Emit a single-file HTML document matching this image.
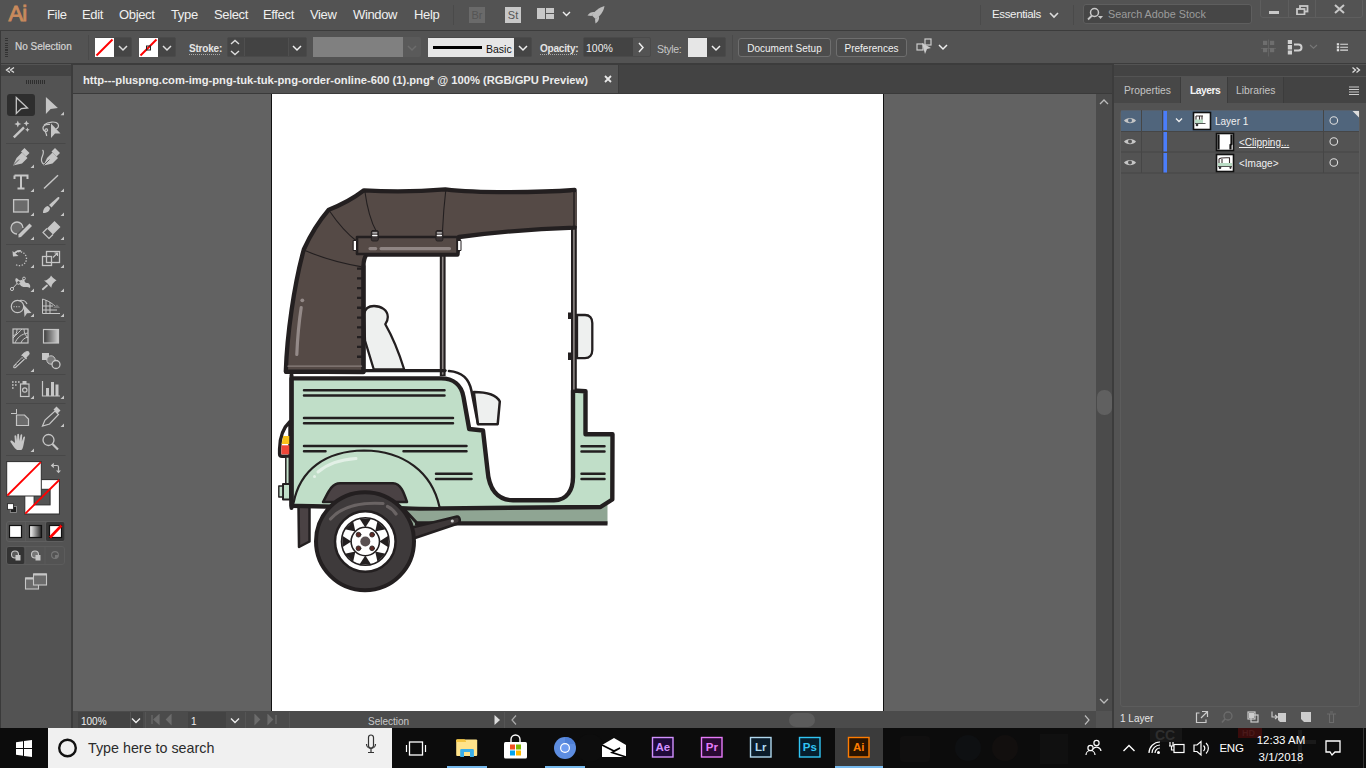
<!DOCTYPE html>
<html><head><meta charset="utf-8">
<style>
*{margin:0;padding:0;box-sizing:border-box}
html,body{width:1366px;height:768px;overflow:hidden;background:#535353;font-family:"Liberation Sans",sans-serif;color:#e8e8e8}
.a{position:absolute}
#menubar{left:0;top:0;width:1366px;height:30px;background:#535353}
#menubar .m{position:absolute;top:7px;font-size:13px;color:#f0f0f0;letter-spacing:-0.35px}
#ctrl{left:0;top:31px;width:1366px;height:33px;background:#535353}
.line{background:#3c3c3c}
#tools{left:0;top:64px;width:71px;height:664px;background:#535353}
#doc{left:73px;top:64px;width:1039px;height:664px;background:#626262}
#tabbar{left:73px;top:65px;width:1039px;height:29px;background:#434343}
#tab{left:73px;top:65px;width:546px;height:28px;background:#535353;border-right:1px solid #3c3c3c}
#artboard{left:272px;top:94px;width:611px;height:617px;background:#fff}
#vscroll{left:1096px;top:94px;width:16px;height:617px;background:#4b4b4b}
#status{left:73px;top:711px;width:1039px;height:17px;background:#4b4b4b}
#rpanel{left:1114px;top:64px;width:252px;height:664px;background:#535353}
#taskbar{left:0;top:728px;width:1366px;height:40px;background:#0c0c0c}
</style></head>
<body>
<div id="menubar" class="a">
  <div class="a" style="left:8.5px;top:1px;font-size:22px;color:#c98a5c;letter-spacing:-0.8px;-webkit-text-stroke:0.9px #c98a5c">Ai</div>
  <span class="m" style="left:47px">File</span>
  <span class="m" style="left:82px">Edit</span>
  <span class="m" style="left:119px">Object</span>
  <span class="m" style="left:171px">Type</span>
  <span class="m" style="left:214px">Select</span>
  <span class="m" style="left:263px">Effect</span>
  <span class="m" style="left:310px">View</span>
  <span class="m" style="left:353px">Window</span>
  <span class="m" style="left:414px">Help</span>
  <div class="a" style="left:453px;top:5px;width:1px;height:20px;background:#4a4a4a"></div>
  <div class="a" style="left:469px;top:7px;width:16px;height:16px;background:#6a6a6a;color:#555;font-size:11px;text-align:center;line-height:17px">Br</div>
  <div class="a" style="left:505px;top:7px;width:16px;height:16px;background:#c8c8c8;color:#555;font-size:11px;text-align:center;line-height:17px">St</div>
  <div class="a" style="left:537px;top:8px;width:8px;height:11px;background:#c8c8c8"></div>
  <div class="a" style="left:546px;top:8px;width:8px;height:5px;background:#c8c8c8"></div>
  <div class="a" style="left:546px;top:14px;width:8px;height:5px;background:#c8c8c8"></div>
  <svg class="a" style="left:562px;top:10px" width="10" height="8"><path d="M1 2 L4.5 5.5 L8 2" stroke="#eee" stroke-width="1.4" fill="none"/></svg>
  <svg class="a" style="left:586px;top:5px" width="20" height="20"><path d="M18.5 1 C13 2.5 8.5 6 6 10.5 L9.5 14 C14 11.5 17.5 7 18.5 1 Z" fill="#bdbdbd"/><path d="M5.5 11 L1.5 10.5 C3.5 7.5 6 6.5 9 7 Z M9 14.5 L9.5 18.5 C12.5 16.5 13.5 14 13 11 Z" fill="#bdbdbd"/></svg>
  <div class="a" style="left:980px;top:5px;width:1px;height:20px;background:#4a4a4a"></div>
  <span class="m" style="left:992px;top:8px;color:#f0f0f0;font-size:11.5px">Essentials</span>
  <svg class="a" style="left:1049px;top:11px" width="10" height="8"><path d="M1 2 L5 6 L9 2" stroke="#ddd" stroke-width="1.6" fill="none"/></svg>
  <div class="a" style="left:1073px;top:5px;width:1px;height:20px;background:#4a4a4a"></div>
  <div class="a" style="left:1083px;top:4px;width:169px;height:20px;background:#464646;border:1px solid #5e5e5e;border-radius:3px"></div>
  <svg class="a" style="left:1086px;top:7px" width="18" height="14"><circle cx="8.5" cy="5.5" r="4" stroke="#c8c8c8" stroke-width="1.5" fill="none"/><path d="M6 8.5 L2 12.5" stroke="#c8c8c8" stroke-width="1.8"/><path d="M12 9 L17 9 L14.5 12 Z" fill="#c8c8c8"/></svg>
  <span class="a" style="left:1108px;top:8px;font-size:10.8px;color:#9c9c9c">Search Adobe Stock</span>
  <div class="a" style="left:1260px;top:-2px;width:103px;height:20px;border:1px solid #5e5e5e;border-radius:3px"></div>
  <div class="a" style="left:1288px;top:0;width:1px;height:18px;background:#5e5e5e"></div>
  <div class="a" style="left:1315px;top:0;width:1px;height:18px;background:#5e5e5e"></div>
  <div class="a" style="left:1269px;top:11px;width:10px;height:3px;background:#c8c8c8"></div>
  <svg class="a" style="left:1296px;top:5px" width="13" height="10"><rect x="4" y="1" width="7.5" height="5.5" stroke="#c8c8c8" stroke-width="1.8" fill="none"/><rect x="1" y="4" width="7.5" height="5.5" stroke="#c8c8c8" stroke-width="1.8" fill="#535353"/></svg>
  <svg class="a" style="left:1334px;top:4px" width="11" height="10"><path d="M1 1 L10 9 M10 1 L1 9" stroke="#c8c8c8" stroke-width="2"/></svg>
</div>
<div class="a line" style="left:0;top:30px;width:1366px;height:1px"></div>
<div id="ctrl" class="a">
  <div class="a" style="left:5px;top:7px;width:3px;height:19px;background:repeating-linear-gradient(#333 0 1px,transparent 1px 2.3px)"></div>
  <span class="a" style="left:15px;top:10px;font-size:10px;color:#d4d4d4;-webkit-text-stroke:0.2px #d4d4d4">No Selection</span>
  <div class="a" style="left:88px;top:4px;width:1px;height:25px;background:#4a4a4a"></div>
  <!-- fill swatch -->
  <div class="a" style="left:95px;top:6px;width:37px;height:20px;border:1px solid #4a4a4a;border-radius:2px;background:#454545"></div>
  <svg class="a" style="left:95px;top:7px" width="19" height="19"><rect width="19" height="19" fill="#fff"/><path d="M1.5 17.5 L17.5 1.5" stroke="#f00" stroke-width="2"/></svg>
  <svg class="a" style="left:118px;top:13px" width="10" height="8"><path d="M1 2 L5 6 L9 2" stroke="#ddd" stroke-width="1.5" fill="none"/></svg>
  <div class="a" style="left:139px;top:6px;width:37px;height:20px;border:1px solid #4a4a4a;border-radius:2px;background:#454545"></div>
  <svg class="a" style="left:139px;top:7px" width="19" height="19"><rect width="19" height="19" fill="#fff"/><path d="M1.5 17.5 L17.5 1.5" stroke="#f00" stroke-width="2"/><rect x="7.5" y="8" width="4" height="4" fill="none" stroke="#222" stroke-width="1"/></svg>
  <svg class="a" style="left:162px;top:13px" width="10" height="8"><path d="M1 2 L5 6 L9 2" stroke="#ddd" stroke-width="1.5" fill="none"/></svg>
  <span class="a" style="left:189px;top:12px;font-size:10px;color:#e4e4e4;font-weight:bold;letter-spacing:-0.2px">Stroke:</span>
  <div class="a" style="left:189px;top:23px;width:31px;height:1px;background:repeating-linear-gradient(90deg,#aaa 0 1px,transparent 1px 2px)"></div>
  <div class="a" style="left:227px;top:6px;width:80px;height:20px;border:1px solid #4a4a4a;border-radius:2px;background:#454545"></div>
  <div class="a" style="left:244px;top:7px;width:45px;height:18px;background:#434343;border-left:1px solid #4f4f4f;border-right:1px solid #4f4f4f"></div>
  <svg class="a" style="left:229px;top:8px" width="12" height="17"><path d="M2 5 L6 1.5 L10 5 M2 12 L6 15.5 L10 12" stroke="#ddd" stroke-width="1.4" fill="none"/></svg>
  <svg class="a" style="left:292px;top:13px" width="10" height="8"><path d="M1 2 L5 6 L9 2" stroke="#eee" stroke-width="1.5" fill="none"/></svg>
  <div class="a" style="left:313px;top:6px;width:108px;height:20px;border-radius:2px;background:#5a5a5a"></div>
  <div class="a" style="left:313px;top:6px;width:90px;height:20px;background:#808080"></div>
  <svg class="a" style="left:407px;top:13px" width="10" height="8"><path d="M1 2 L5 6 L9 2" stroke="#6c6c6c" stroke-width="1.5" fill="none"/></svg>
  <div class="a" style="left:428px;top:6px;width:104px;height:20px;border:1px solid #4a4a4a;border-radius:2px;background:#454545"></div>
  <div class="a" style="left:428px;top:7px;width:86px;height:19px;background:#e6e6e6"></div>
  <div class="a" style="left:433px;top:15px;width:49px;height:3px;background:#000"></div>
  <span class="a" style="left:486px;top:12px;font-size:10.5px;color:#111">Basic</span>
  <svg class="a" style="left:518px;top:13px" width="10" height="8"><path d="M1 2 L5 6 L9 2" stroke="#eee" stroke-width="1.5" fill="none"/></svg>
  <span class="a" style="left:540px;top:12px;font-size:10px;color:#e4e4e4;font-weight:bold;letter-spacing:-0.2px">Opacity:</span>
  <div class="a" style="left:540px;top:23px;width:37px;height:1px;background:repeating-linear-gradient(90deg,#aaa 0 1px,transparent 1px 2px)"></div>
  <div class="a" style="left:583px;top:6px;width:68px;height:20px;border:1px solid #4a4a4a;border-radius:2px;background:#535353"></div>
  <div class="a" style="left:584px;top:7px;width:49px;height:18px;background:#434343"></div>
  <span class="a" style="left:586px;top:11px;font-size:10.5px;color:#eee">100%</span>
  <svg class="a" style="left:637px;top:11px" width="8" height="11"><path d="M2 1 L6 5.5 L2 10" stroke="#eee" stroke-width="1.5" fill="none"/></svg>
  <span class="a" style="left:657px;top:12px;font-size:10.5px;color:#c6c6c6;letter-spacing:-0.3px">Style:</span>
  <div class="a" style="left:688px;top:6px;width:38px;height:20px;border:1px solid #4a4a4a;border-radius:2px;background:#454545"></div>
  <div class="a" style="left:688px;top:7px;width:19px;height:19px;background:#e6e6e6"></div>
  <svg class="a" style="left:711px;top:13px" width="10" height="8"><path d="M1 2 L5 6 L9 2" stroke="#eee" stroke-width="1.5" fill="none"/></svg>
  <div class="a" style="left:732px;top:4px;width:1px;height:25px;background:#4a4a4a"></div>
  <div class="a" style="left:738px;top:7px;width:93px;height:19px;border:1px solid #6e6e6e;border-radius:3px;background:#4c4c4c;font-size:10px;color:#f0f0f0;text-align:center;line-height:19px">Document Setup</div>
  <div class="a" style="left:836px;top:7px;width:71px;height:19px;border:1px solid #6e6e6e;border-radius:3px;background:#4c4c4c;font-size:10px;color:#f0f0f0;text-align:center;line-height:19px">Preferences</div>
  <svg class="a" style="left:916px;top:7px" width="18" height="18"><rect x="1" y="6" width="6" height="6" stroke="#ccc" fill="none" stroke-width="1.2"/><rect x="9" y="1" width="6" height="6" stroke="#ccc" fill="none" stroke-width="1.2"/><path d="M6 5 L15 10 L11 11 L9 16 Z" fill="#ccc"/></svg>
  <svg class="a" style="left:938px;top:12px" width="10" height="8"><path d="M1 2 L5 6 L9 2" stroke="#eee" stroke-width="1.5" fill="none"/></svg>
  <svg class="a" style="left:1250px;top:2px" width="116" height="26">
    <path d="M18.5 6.5 V23.5 M11 15.5 H26" stroke="#666" stroke-width="0.8"/>
    <rect x="13" y="7.8" width="4.2" height="4.2" fill="#6e6e6e"/><rect x="20" y="7.8" width="4.2" height="4.2" fill="#6e6e6e"/>
    <rect x="13" y="15" width="4.2" height="4.2" fill="#6e6e6e"/><rect x="20" y="15" width="4.2" height="4.2" fill="#6e6e6e"/>
    <rect x="37.8" y="7" width="4.2" height="4" fill="#d0d0d0"/><rect x="37.8" y="12" width="4.2" height="4.5" fill="#d0d0d0"/><rect x="37.8" y="17.5" width="4.2" height="4" fill="#d0d0d0"/>
    <path d="M44 11.5 H48.5 A3 3 0 0 1 48.5 17.5 H44" stroke="#d0d0d0" stroke-width="2" fill="none"/>
    <path d="M60 12 L63.5 15.2 L67 12" stroke="#777" stroke-width="1.1" fill="none"/>
    <rect x="86.8" y="10.2" width="2.3" height="2.2" fill="#ddd"/><rect x="86.8" y="13.2" width="2.3" height="2.2" fill="#ddd"/><rect x="86.8" y="16.1" width="2.3" height="2.2" fill="#ddd"/>
    <path d="M90.2 11.2 H98 M90.2 14.2 H98 M90.2 17.1 H98" stroke="#ddd" stroke-width="1.1"/>
  </svg>
</div>
<div class="a line" style="left:0;top:63px;width:1366px;height:2px"></div>
<div id="tools" class="a"></div>
<div class="a" style="left:0;top:65px;width:71px;height:11px;background:#434343"></div>
<svg class="a" style="left:0;top:0" width="71" height="728">
  <!-- header << -->
  <path d="M10 67.5 L6.5 70 L10 72.5 M14 67.5 L10.5 70 L14 72.5" stroke="#ddd" stroke-width="1.3" fill="none"/>
  <path d="M26.5 80v4M28.5 80v4M30.5 80v4M32.5 80v4M34.5 80v4M36.5 80v4M38.5 80v4M40.5 80v4M42.5 80v4M44.5 80v4" stroke="#2e2e2e" stroke-width="1"/>
  <!-- selection active bg -->
  <rect x="7" y="94" width="28" height="22" rx="3" fill="#2e2e2e"/>
  <path d="M16.3 97.5 L27.5 108 L21.3 108.6 L16.3 113.5 Z" fill="none" stroke="#c6c6c6" stroke-width="1.3" stroke-linejoin="miter"/>
  <path d="M45.9 97.1 L57.9 108 L50.6 109 L45.9 113.9 Z" fill="#c6c6c6"/>
  <path d="M64 111.8 L64 115.3 L60.5 115.3 Z" fill="#c6c6c6"/>
  <!-- magic wand -->
  <path d="M13.8 137.3 L24 127.3" stroke="#c6c6c6" stroke-width="2.4"/>
  <path d="M17.8 120.5 l1 2.5 2.5 1 -2.5 1 -1 2.5 -1 -2.5 -2.5 -1 2.5 -1z" fill="#c6c6c6"/>
  <path d="M26.4 120.5 l0.9 2 2 0.9 -2 0.9 -0.9 2 -0.9 -2 -2 -0.9 2 -0.9z" fill="#c6c6c6"/>
  <path d="M27.4 127.5 l0.7 1.5 1.5 0.7 -1.5 0.7 -0.7 1.5 -0.7 -1.5 -1.5 -0.7 1.5 -0.7z" fill="#c6c6c6"/>
  <!-- lasso -->
  <path d="M50 124.5 C44 124 42 127 43.5 130 C44.5 132 47 132 47.5 130.5 C48 129 45.5 128 45 130 C44.8 132 47 134 46.5 136" stroke="#c6c6c6" stroke-width="1.2" fill="none"/>
  <path d="M44 125 C48 121.5 56 121 58 124 C59 126 58 128 56 129" stroke="#c6c6c6" stroke-width="1.2" fill="none"/>
  <path d="M51 123.5 L60.5 133.5 L55 133.5 L51 138 Z" fill="#c6c6c6"/>
  <path d="M6 143.5 H65.5" stroke="#484848" stroke-width="1"/>
  <!-- pen -->
  <path d="M13 165.5 L16.5 158 L22 152.5 L27.5 158 L22 163.5 Z" fill="#c6c6c6"/>
  <path d="M21 151.5 L24.5 148 L29.5 153 L26 156.5 Z" fill="#c6c6c6"/>
  <path d="M13.5 165 L19 159.5" stroke="#535353" stroke-width="0.9"/>
  <path d="M34 164.5 L34 168 L30.5 168 Z" fill="#c6c6c6"/>
  <!-- curvature pen -->
  <path d="M42.5 150 C45 152 42 156 41.5 159 C41 162 43 164.5 45 164" stroke="#c6c6c6" stroke-width="1.2" fill="none"/>
  <path d="M43.5 165.5 L47 158 L52.5 152.5 L58 158 L52.5 163.5 Z" fill="#c6c6c6"/>
  <path d="M51.5 151.5 L55 148 L60 153 L56.5 156.5 Z" fill="#c6c6c6"/>
  <path d="M44 165 L49.5 159.5" stroke="#535353" stroke-width="0.9"/>
  <!-- type -->
  <path d="M14.5 175.5 H27.5 V179 M14.5 179 V175.5 M21 175.5 V188.5 M17.5 188.5 H24.5" stroke="#c6c6c6" stroke-width="2" fill="none"/>
  <path d="M34 188.5 L34 192 L30.5 192 Z" fill="#c6c6c6"/>
  <path d="M44 188.5 L58 175.3" stroke="#c6c6c6" stroke-width="1.5"/>
  <path d="M64 188.5 L64 192 L60.5 192 Z" fill="#c6c6c6"/>
  <!-- rect -->
  <rect x="13.6" y="199.7" width="14.6" height="12.3" fill="#6b6b6b" stroke="#c6c6c6" stroke-width="1.3"/>
  <path d="M34 212.5 L34 216 L30.5 216 Z" fill="#c6c6c6"/>
  <!-- brush -->
  <path d="M43 213 C43 209 45 206.5 48 206 L50 208 C50 211 47 213 43 213Z" fill="#c6c6c6"/>
  <path d="M49 205 L57.5 197.5 C59 196.5 60 197.5 59 199 L51.5 207.5 Z" fill="#c6c6c6"/>
  <path d="M64 212.5 L64 216 L60.5 216 Z" fill="#c6c6c6"/>
  <!-- shaper -->
  <path d="M23 228 A6 6 0 1 0 17 234" stroke="#c6c6c6" stroke-width="1.3" fill="#6b6b6b"/>
  <path d="M18.5 237.5 L18.5 234.5 L29.5 223.5 L32 226 L21 237 Z" fill="#c6c6c6"/>
  <path d="M34 236.5 L34 240 L30.5 240 Z" fill="#c6c6c6"/>
  <!-- eraser -->
  <path d="M47 228.5 L54.5 221 L60.5 227 L53 234.5 Z" fill="#c6c6c6"/>
  <path d="M47 228.5 L43 232.5 L49 238.5 L53 234.5" fill="none" stroke="#c6c6c6" stroke-width="1.2"/>
  <path d="M64 236.5 L64 240 L60.5 240 Z" fill="#c6c6c6"/>
  <path d="M6 244.5 H65.5" stroke="#484848" stroke-width="1"/>
  <!-- rotate -->
  <path d="M13.5 255 A7 7 0 1 1 15 264" stroke="#c6c6c6" stroke-width="1.3" fill="none" stroke-dasharray="1.3 1.5"/>
  <path d="M12.5 251 L13 256.5 L18.5 256 Z" fill="#c6c6c6"/>
  <path d="M13.5 255 C15 252 18 250.5 21 251" stroke="#c6c6c6" stroke-width="1.6" fill="none"/>
  <path d="M34 264.5 L34 268 L30.5 268 Z" fill="#c6c6c6"/>
  <!-- scale -->
  <rect x="42.5" y="256.5" width="9" height="9" stroke="#c6c6c6" stroke-width="1.3" fill="none"/>
  <rect x="46.5" y="251.5" width="13" height="11" stroke="#c6c6c6" stroke-width="1.3" fill="none"/>
  <path d="M53 257.5 L57.5 253 M54.5 253 H57.5 V256" stroke="#c6c6c6" stroke-width="1.2" fill="none"/>
  <path d="M64 264.5 L64 268 L60.5 268 Z" fill="#c6c6c6"/>
  <!-- puppet warp -->
  <path d="M16 278 C14 281 17 284 19 283 L21 286 C24 288 28 286 30 288 C31 285 29 283 27 283 C25 283 24 281 24.5 279 C22 281 19 281 18 279 Z" fill="#c6c6c6"/>
  <path d="M12 289 L18 282.5 L24 279" stroke="#c6c6c6" stroke-width="1" fill="none"/>
  <circle cx="12" cy="289" r="1.6" fill="#535353" stroke="#c6c6c6" stroke-width="1"/>
  <circle cx="18.5" cy="282.5" r="1.8" fill="#535353" stroke="#c6c6c6" stroke-width="1"/>
  <circle cx="24" cy="278.5" r="1.4" fill="#535353" stroke="#c6c6c6" stroke-width="1"/>
  <path d="M34 288.5 L34 292 L30.5 292 Z" fill="#c6c6c6"/>
  <!-- pin -->
  <path d="M51 275.5 C52.5 277.5 54.5 279 56.5 280.5 C54.5 281.5 53 283 52 285 C51.5 286 51.5 287 51.3 287.8 C49 285 46.5 282.5 44 280.5 C45.5 280.5 47 280 48 279 C49.5 278 50.5 277 51 275.5 Z" fill="#c6c6c6"/>
  <path d="M47 285.5 L42.8 289.2" stroke="#c6c6c6" stroke-width="1.8" stroke-linecap="round"/>
  <path d="M64 288.5 L64 292 L60.5 292 Z" fill="#c6c6c6"/>
  <!-- shape builder -->
  <circle cx="17.5" cy="306.5" r="6.2" stroke="#c6c6c6" stroke-width="1.2" fill="none"/>
  <path d="M19.5 300.6 A6.2 6.2 0 0 1 27 304" stroke="#c6c6c6" stroke-width="1.2" fill="none"/>
  <path d="M13.5 306.8h1.2M16 306.8h1.2M18.5 306.8h1.2" stroke="#c6c6c6" stroke-width="1.1"/>
  <path d="M23.5 304.5 L31.5 313 L27 313.3 L24.5 317 Z" fill="#c6c6c6"/>
  <path d="M34 313.5 L34 317 L30.5 317 Z" fill="#c6c6c6"/>
  <!-- perspective grid -->
  <path d="M42.5 299 V313.5 H60 M42.5 299 C49 301 53 304 56 307 M42.5 310 H57 M42.5 306 L53 306 M46 300 V313.5 M50 302 V313.5" stroke="#c6c6c6" stroke-width="1" fill="none"/>
  <path d="M53 308 L57 304.5 L60 308 Z" fill="#7a7a7a"/>
  <path d="M64 313.5 L64 317 L60.5 317 Z" fill="#c6c6c6"/>
  <path d="M6 321.5 H65.5" stroke="#484848" stroke-width="1"/>
  <!-- mesh -->
  <rect x="13" y="329" width="15" height="14" stroke="#c6c6c6" stroke-width="1.2" fill="none"/>
  <path d="M13 338 C17 334 20 331 22 329 M15 343 C17 338 21 334 28 333 M21 343 C22 340 24 338 28 337 M17 329 C17 333 16 335 13 336 M24 329 C24 333 26 336 28 338" stroke="#c6c6c6" stroke-width="1" fill="none"/>
  <!-- gradient -->
  <defs><linearGradient id="tg" x1="0" x2="1"><stop offset="0" stop-color="#3a3a3a"/><stop offset="1" stop-color="#d0d0d0"/></linearGradient>
  <linearGradient id="tg2" x1="0" x2="1"><stop offset="0" stop-color="#fff"/><stop offset="1" stop-color="#222"/></linearGradient></defs>
  <rect x="43.5" y="329.5" width="15" height="13.5" stroke="#c6c6c6" stroke-width="1.2" fill="url(#tg)"/>
  <!-- eyedropper -->
  <circle cx="27.2" cy="353.5" r="2.4" fill="#c6c6c6"/>
  <path d="M21 355.5 L24.5 352 L27.5 355 L28 356 L26.5 357.5 L27 358.5 L26 359.5 L22.5 356 Z" fill="#c6c6c6"/>
  <path d="M22.5 357.5 L15 365 C13 366.5 13.5 368.5 15.5 367.5 L24.5 359" fill="none" stroke="#c6c6c6" stroke-width="1.1"/>
  <path d="M17 364 L22.5 358.5" stroke="#3a3a3a" stroke-width="1.5" stroke-dasharray="1 0.6"/>
  <path d="M34 368.5 L34 372 L30.5 372 Z" fill="#c6c6c6"/>
  <!-- blend -->
  <rect x="42" y="353" width="7" height="7" fill="#c6c6c6"/>
  <circle cx="51" cy="360" r="4.2" fill="#7a7a7a" stroke="#c6c6c6" stroke-width="1"/>
  <circle cx="56" cy="364.5" r="4" fill="#535353" stroke="#c6c6c6" stroke-width="1.3"/>
  <path d="M6 374.5 H65.5" stroke="#484848" stroke-width="1"/>
  <!-- symbol sprayer -->
  <path d="M12 382h1.6M15 382h1.6M18 382h1.6M12 385h1.6M15 385h1.6M12 388h1.6" stroke="#c6c6c6" stroke-width="1.6"/>
  <rect x="20.5" y="384" width="8.5" height="12.5" stroke="#c6c6c6" stroke-width="1.2" fill="none"/>
  <rect x="22.5" y="381" width="4" height="3" fill="#c6c6c6"/>
  <circle cx="24.8" cy="390" r="2.2" stroke="#c6c6c6" stroke-width="1.2" fill="none"/>
  <path d="M34 395.5 L34 399 L30.5 399 Z" fill="#c6c6c6"/>
  <!-- graph -->
  <path d="M42.5 381 V396 H60" stroke="#c6c6c6" stroke-width="1.2" fill="none"/>
  <rect x="46" y="388" width="3" height="8" fill="#c6c6c6"/>
  <rect x="51" y="382" width="3" height="14" fill="#c6c6c6"/>
  <rect x="55.5" y="384.5" width="3" height="11.5" fill="#c6c6c6"/>
  <path d="M64 395.5 L64 399 L60.5 399 Z" fill="#c6c6c6"/>
  <path d="M6 403.5 H65.5" stroke="#484848" stroke-width="1"/>
  <!-- artboard -->
  <path d="M16.5 409 V414 M11 413.5 H16" stroke="#c6c6c6" stroke-width="1"/>
  <path d="M16.5 415 H24.5 L28.5 419 V425.5 H16.5 Z" fill="#6b6b6b" stroke="#c6c6c6" stroke-width="1.2"/>
  <!-- slice/knife -> pencil-like -->
  <path d="M42.5 426 L45 420 L55 411 L58.5 414.5 L49.5 424 Z" fill="none" stroke="#c6c6c6" stroke-width="1.2"/>
  <path d="M53.5 409.5 L56.5 406.5 L60.5 410.5 L57.5 413.5 Z" fill="#c6c6c6"/>
  <path d="M64 423.5 L64 427 L60.5 427 Z" fill="#c6c6c6"/>
  <!-- hand -->
  <path d="M17 450 C14 448 12 444 10.5 442 C10 441 11 440 12.5 441 L15 443 L14.5 436 C14.5 435 16 435 16.3 436 L17 441 L17.3 434.5 C17.5 433.5 19 433.5 19 434.5 L19.5 441 L20.5 435 C20.8 434 22.3 434 22.2 435 L21.8 441.5 L23.5 437 C24 436 25.3 436.3 25 437.5 L23.5 445 C23 448 22 450 21 450 Z" fill="#c6c6c6"/>
  <path d="M34 448.5 L34 452 L30.5 452 Z" fill="#c6c6c6"/>
  <!-- zoom -->
  <circle cx="48.5" cy="440" r="5.5" stroke="#c6c6c6" stroke-width="1.3" fill="none"/>
  <path d="M52.5 444 L58 449.5" stroke="#c6c6c6" stroke-width="2.2"/>
  <path d="M6 455.5 H65.5" stroke="#484848" stroke-width="1"/>
  <!-- fill / stroke -->
  <rect x="24.8" y="479.6" width="34.6" height="34.4" fill="#fff" stroke="#2e2e2e" stroke-width="1"/>
  <rect x="34.1" y="489.3" width="16" height="15.6" fill="#535353" stroke="#2e2e2e" stroke-width="1"/>
  <path d="M25.3 513.6 L59.2 480" stroke="#f00" stroke-width="1.8"/>
  <rect x="6.7" y="461.6" width="34.6" height="34.4" fill="#fff" stroke="#2e2e2e" stroke-width="1"/>
  <path d="M7.3 495.5 L40.8 462.2" stroke="#f00" stroke-width="1.8"/>
  <path d="M50.7 465.5 L53.8 462.8 V468.2 Z M56 470.4 H61 L58.5 473.3 Z" fill="#c6c6c6"/><path d="M53.5 465.5 H57 Q58.5 465.5 58.5 467 V470.8" stroke="#c6c6c6" stroke-width="1.2" fill="none"/>
  <rect x="10.3" y="506.4" width="6.2" height="6" fill="#1e1e1e" stroke="#999" stroke-width="0.8"/>
  <rect x="7.5" y="503.7" width="6" height="5.6" fill="#fff" stroke="#1e1e1e" stroke-width="0.8"/>
  <!-- color/gradient/none -->
  <rect x="6.5" y="521.5" width="58" height="20" rx="2.5" fill="#535353" stroke="#5f5f5f" stroke-width="1"/>
  <rect x="46" y="522" width="18.5" height="19" rx="2" fill="#363636"/>
  <path d="M25.5 522 V541 M45.5 522 V541" stroke="#5a5a5a" stroke-width="1"/>
  <rect x="9.5" y="525.5" width="12" height="12" fill="#fff" stroke="#111" stroke-width="1.2"/>
  <rect x="29.5" y="525.5" width="12" height="12" fill="url(#tg2)" stroke="#111" stroke-width="1.2"/>
  <rect x="49.5" y="525.5" width="12" height="12" fill="#fff" stroke="#111" stroke-width="1.2"/>
  <path d="M50 537.5 L61.5 525.5" stroke="#f00" stroke-width="2.6"/>
  <!-- draw modes -->
  <rect x="6.5" y="546.5" width="58" height="18" rx="2.5" fill="none" stroke="#5c5c5c" stroke-width="1"/>
  <rect x="7" y="547" width="17.5" height="17" rx="2" fill="#333"/>
  <path d="M25 547 V564 M45 547 V564" stroke="#5a5a5a" stroke-width="1"/>
  <circle cx="15" cy="554.5" r="3.5" fill="#5a5a5a" stroke="#c6c6c6" stroke-width="1.1"/>
  <rect x="15.5" y="555" width="5" height="5.5" fill="#c6c6c6"/>
  <circle cx="35" cy="554.5" r="3.5" fill="#777" stroke="#c6c6c6" stroke-width="1.1"/>
  <rect x="35.5" y="555" width="5" height="5.5" fill="#c6c6c6"/>
  <circle cx="55" cy="555" r="3.4" fill="none" stroke="#777" stroke-width="1.1"/>
  <path d="M55 555 H58.4 A3.4 3.4 0 0 1 55 558.4 Z" fill="#777"/>
  <!-- screen mode -->
  <rect x="25.5" y="578" width="13" height="11" fill="#6b6b6b" stroke="#c6c6c6" stroke-width="1.1"/>
  <path d="M25.5 578.5 H38.5" stroke="#c6c6c6" stroke-width="2"/>
  <rect x="33.5" y="574" width="13" height="11" fill="#6b6b6b" stroke="#c6c6c6" stroke-width="1.1"/>
  <path d="M33.5 574.5 H46.5" stroke="#c6c6c6" stroke-width="2"/>
</svg>
<div class="a line" style="left:71px;top:64px;width:2px;height:664px"></div>
<div id="doc" class="a"></div>
<div id="tabbar" class="a"></div>
<div id="tab" class="a"></div>
<div class="a" style="left:73px;top:63px;width:1041px;height:2px;background:#3c3c3c"></div>
<div class="a" style="left:73px;top:93px;width:1039px;height:1px;background:#3a3a3a"></div>
<span class="a" style="left:83px;top:74px;font-size:11.2px;font-weight:bold;color:#ececec;white-space:nowrap">http---pluspng.com-img-png-tuk-tuk-png-order-online-600 (1).png* @ 100% (RGB/GPU Preview)</span>
<svg class="a" style="left:604px;top:75px" width="8" height="8"><path d="M1 1 L7 7 M7 1 L1 7" stroke="#e8e8e8" stroke-width="1.8"/></svg>
<div class="a" style="left:271px;top:94px;width:613px;height:617px;background:#111"></div>
<div id="artboard" class="a"></div>
<svg class="a" style="left:272px;top:94px" width="611" height="617" viewBox="272 94 611 617">
<g stroke-linejoin="round" stroke-linecap="round">
  <!-- chassis strip -->
  <path d="M392 505 L607.5 505 L607.5 524 L425 524 L410 531 Z" fill="#8fa593"/>
  <path d="M401 506 L416 522" stroke="#231f20" stroke-width="3"/>
  <path d="M415 523.3 H607.5" stroke="#231f20" stroke-width="4.2" stroke-linecap="butt"/>
  <!-- swing arm -->
  <path d="M410 528 L457 516.5 C460 516 461 522.5 458 523.5 L412 539 Z" fill="#3e3839" stroke="#231f20" stroke-width="2.5"/>
  <circle cx="452.3" cy="521" r="1.6" fill="#ccc"/>
  <!-- mud flap -->
  <path d="M298.5 506 H309.5 V541.5 L299 547 Z" fill="#4a4244" stroke="#231f20" stroke-width="2.5"/>
  <!-- body left section -->
  <path d="M291.5 378.4 H441 C453 378.4 461.5 385 463.5 397 L469.2 429 L483 430.5 L487.5 470 C489 490 498 500.3 513 500.3 L554 500.3 C567 500.3 573 490 573 477 L573 390.5 L585.5 391.2 L585.5 434.2 L612.5 434.2 L612.3 499.5 L600.5 507 L420 508.6 L291.5 505.8 Z" fill="#c0dec8" stroke="#231f20" stroke-width="4.4"/>
  <!-- fender -->
  <path d="M293.5 503 C300 470 325 451 364 450.5 C404 451 432 472 439.5 507" fill="#c0dec8" stroke="#231f20" stroke-width="2.2"/>
  <path d="M318 472 C326 465 340 459.5 356 458.5" stroke="#e2f0e6" stroke-width="3" fill="none"/><circle cx="314.5" cy="476.5" r="1.5" fill="#e2f0e6"/>
  <!-- body lines -->
  <g stroke="#231f20" stroke-width="2.5">
    <path d="M304 390.3 H444.5 M304 395.4 H444.5"/>
    <path d="M304 418 H453 M304 423.2 H453"/>
    <path d="M304 446 H466.5 M304 451.3 H325.5 M403.5 451.3 H466.5"/>
    <path d="M436 473.8 H471.5 M436 479 H471.5"/>
    <path d="M581.5 446.3 H604.5 M581.5 451.5 H604.5"/>
    <path d="M581.5 473.8 H604.5 M581.5 479 H604.5"/>
  </g>
  <!-- mudguard dark -->
  <path d="M323 502 C328 493 331 483.5 340 483.3 L393 483.3 C401 483.5 404 493 407 502 Z" fill="#4a4244" stroke="#231f20" stroke-width="2.5"/>
  <!-- wheel -->
  <circle cx="365" cy="541.3" r="49" fill="#3e3a3b" stroke="#231f20" stroke-width="4"/>
  <path d="M330.5 519 C340 508 358 502 383 503.5" stroke="#6a6464" stroke-width="3.2" fill="none"/>
  <path d="M387.5 506.5 C391 508 394 511 396 514" stroke="#6a6464" stroke-width="3.2" fill="none"/>
  <circle cx="365.3" cy="541.5" r="30.3" fill="#fff" stroke="#231f20" stroke-width="2.5"/>
  <circle cx="365.3" cy="541.5" r="23.8" fill="#fff" stroke="#231f20" stroke-width="1.6"/>
  <g fill="#231f20" transform="translate(365.3 541.5)"><path d="M-5.8 -23 L5.8 -23 L0 -14 Z" transform="rotate(0)"/><path d="M-5.8 -23 L5.8 -23 L0 -14 Z" transform="rotate(45)"/><path d="M-5.8 -23 L5.8 -23 L0 -14 Z" transform="rotate(90)"/><path d="M-5.8 -23 L5.8 -23 L0 -14 Z" transform="rotate(135)"/><path d="M-5.8 -23 L5.8 -23 L0 -14 Z" transform="rotate(180)"/><path d="M-5.8 -23 L5.8 -23 L0 -14 Z" transform="rotate(225)"/><path d="M-5.8 -23 L5.8 -23 L0 -14 Z" transform="rotate(270)"/><path d="M-5.8 -23 L5.8 -23 L0 -14 Z" transform="rotate(315)"/></g>
  <circle cx="365.3" cy="541.5" r="14.2" fill="#fff" stroke="#231f20" stroke-width="1.6"/>
  <circle cx="365.3" cy="541.5" r="5" fill="#5a5152"/>
  <g fill="#5b2a26" stroke="#231f20" stroke-width="0.8">
    <circle cx="358.5" cy="534.7" r="2.4"/><circle cx="372.1" cy="534.7" r="2.4"/><circle cx="358.5" cy="548.3" r="2.4"/><circle cx="372.1" cy="548.3" r="2.4"/>
  </g>
  <!-- tail light -->
  <path d="M290 421.5 C284 427 279.8 437 279.6 449 V454 Q279.6 456.3 282 456.3 H290 Z" fill="#fff" stroke="#231f20" stroke-width="3.4"/>
  <path d="M283.2 436 H289.5 V444 H281.6 Z" fill="#f8c21c"/>
  <path d="M281.4 445.3 H289.5 V454.3 H281.4 Z" fill="#ee4638"/>
  <rect x="285.8" y="457" width="3.5" height="27" fill="#c0dec8" stroke="#231f20" stroke-width="1.5"/>
  <rect x="283" y="484" width="7" height="15.5" fill="#c0dec8" stroke="#231f20" stroke-width="2"/>
  <rect x="278.8" y="486" width="4" height="11" fill="#c0dec8" stroke="#231f20" stroke-width="1.4"/>
  <path d="M291.5 375 V508" stroke="#231f20" stroke-width="4"/>
  <!-- handle rail -->
  <path d="M449 371 C462 372 469 378 471.5 391 L478 424" stroke="#231f20" stroke-width="2.6" fill="none"/>
  <path d="M473.8 392 C485 392 496 394 499.8 401.5 L497.7 424.2 L478 424.2 Z" fill="#eef0ef" stroke="#231f20" stroke-width="2.5"/>
  <!-- posts -->
  <rect x="439.8" y="252" width="5.8" height="124" fill="#231f20"/><path d="M442.7 254 V374" stroke="#8d8785" stroke-width="1.6"/>
  <rect x="571" y="226" width="5.8" height="165" fill="#231f20"/><path d="M573.9 228 V389" stroke="#8d8785" stroke-width="1.6"/>
  <!-- mirror -->
  <path d="M577 315 H585 C589.5 315 592.3 318 592.3 323 V350 C592.3 355 589.5 358.2 585 358.2 H577 Z" fill="#eef0ef" stroke="#231f20" stroke-width="2.3"/>
  <rect x="568" y="312.5" width="3.5" height="6.5" fill="#231f20"/>
  <rect x="568" y="352.5" width="3.5" height="7.5" fill="#231f20"/>
  <!-- seat -->
  <path d="M364 314 C365 308.5 369 306 374 306 C381 306 387.8 310 387.8 317 C387.8 320 387 322 385.3 324.2 C391.5 335 398.5 351 404.2 369.5 L373.8 369.5 L365 340.6 Z" fill="#eef0ef" stroke="#231f20" stroke-width="2.3"/>
  <!-- canopy -->
  <path d="M364 190.3 C390 192 420 191.5 445.3 189.4 C480 193.5 540 192.5 574.6 190 L574.6 227.6 C545 228.5 505 231 459 237 L457.5 254.5 L366.5 254.5 C364 258 363.5 262 363.5 266 L363.5 372 L285.8 371.5 C287 335 294 285 303.8 249.5 Q314 227 328.8 209.7 C341 205 354 198 364 190.3 Z" fill="#554a46" stroke="#231f20" stroke-width="4.3"/>
  <path d="M363.5 266 L363.5 372 L286 372" stroke="#231f20" stroke-width="4" fill="none"/>
  <rect x="571.5" y="192.2" width="5.2" height="33.4" fill="#554a46"/>
  <path d="M574 192 V227" stroke="#231f20" stroke-width="1.5"/>
  <path d="M364.8 191 C367 207 371 222 376.4 231.5" stroke="#231f20" stroke-width="1.1" fill="none"/>
  <path d="M445.8 190 C444 205 443 220 442.5 231" stroke="#231f20" stroke-width="1.1" fill="none"/>
  <path d="M329.5 211 C337 222 346 233 356.8 241.2" stroke="#231f20" stroke-width="1.1" fill="none"/>
  <path d="M305 250.5 C320 257 340 263 360.7 266.6" stroke="#231f20" stroke-width="1.1" fill="none"/>
  <path d="M288 366.2 H361.5" stroke="#8a807d" stroke-width="1.3" fill="none"/>
  <path d="M301.2 307.5 C299 322 297.5 338 296.8 354.5" stroke="#948a88" stroke-width="3.2" fill="none"/>
  <circle cx="302.3" cy="300.3" r="1.9" fill="#948a88"/>
  <g fill="#231f20"><path d="M357 267.5h6.5v2.3h-6.5zM357 277.3h6.5v2.3h-6.5zM357 287h6.5v2.3h-6.5zM357 296.8h6.5v2.3h-6.5zM357 306.6h6.5v2.3h-6.5zM357 316.4h6.5v2.3h-6.5zM357 326.2h6.5v2.3h-6.5zM357 336h6.5v2.3h-6.5zM357 345.8h6.5v2.3h-6.5zM357 355.6h6.5v2.3h-6.5z"/></g>
  <!-- front bar -->
  <rect x="357" y="237" width="100.5" height="17" fill="#554a46" stroke="#231f20" stroke-width="2.6"/>
  <path d="M370 248.6 H375.7 M381 248.6 H449.5" stroke="#8f8583" stroke-width="3.2"/>
  <rect x="353.5" y="240.5" width="3" height="10" fill="#fff" stroke="#231f20" stroke-width="1"/>
  <rect x="458" y="240.5" width="3" height="10" fill="#fff" stroke="#231f20" stroke-width="1"/>
  <rect x="371.3" y="230.5" width="7" height="10.5" rx="1.5" fill="#3a3334" stroke="#231f20" stroke-width="0.9"/>
  <path d="M372.8 232.8h4 M372.8 235.5h4" stroke="#ccc" stroke-width="1.2"/><path d="M372.8 235.5h4" stroke="#fff" stroke-width="1.3"/>
  <rect x="435.9" y="230.5" width="7" height="10.5" rx="1.5" fill="#3a3334" stroke="#231f20" stroke-width="0.9"/>
  <path d="M437.4 232.8h4 M437.4 235.5h4" stroke="#ccc" stroke-width="1.2"/><path d="M437.4 235.5h4" stroke="#fff" stroke-width="1.3"/>
  <!-- cabin floor line -->
  <path d="M364 370.6 H445" stroke="#231f20" stroke-width="3.4"/>
</g>
</svg>
<div id="vscroll" class="a"></div>
<svg class="a" style="left:1098px;top:98px" width="12" height="8"><path d="M2 6 L6 2 L10 6" stroke="#bbb" stroke-width="1.3" fill="none"/></svg>
<div class="a" style="left:1097px;top:390px;width:15px;height:25px;border-radius:7px;background:#606060"></div>
<svg class="a" style="left:1098px;top:697px" width="12" height="8"><path d="M2 2 L6 6 L10 2" stroke="#bbb" stroke-width="1.3" fill="none"/></svg>
<div id="status" class="a"></div>
<div class="a" style="left:75px;top:712px;width:1021px;height:16px;background:#4b4b4b"></div>
<div class="a" style="left:78px;top:712px;width:65px;height:16px;background:#434343"></div>
<span class="a" style="left:81px;top:716px;font-size:10px;color:#eee">100%</span>
<div class="a" style="left:130px;top:712px;width:1px;height:16px;background:#555"></div>
<svg class="a" style="left:131px;top:717px" width="10" height="8"><path d="M1 1.5 L5 5.5 L9 1.5" stroke="#eee" stroke-width="1.4" fill="none"/></svg>
<div class="a" style="left:145px;top:712px;width:1px;height:16px;background:#555"></div>
<svg class="a" style="left:150px;top:714px" width="40" height="12"><path d="M2 1 V10 M9 1 L4 5.5 L9 10 Z M21 1 L16.5 5.5 L21 10 Z" stroke="#6c6c6c" fill="#6c6c6c" stroke-width="1.2"/></svg>
<div class="a" style="left:188px;top:712px;width:38px;height:16px;background:#434343"></div>
<span class="a" style="left:191px;top:716px;font-size:10px;color:#eee">1</span>
<svg class="a" style="left:230px;top:717px" width="10" height="8"><path d="M1 1.5 L5 5.5 L9 1.5" stroke="#eee" stroke-width="1.4" fill="none"/></svg>
<div class="a" style="left:245px;top:712px;width:1px;height:16px;background:#555"></div>
<svg class="a" style="left:253px;top:714px" width="30" height="12"><path d="M2 1 L6.5 5.5 L2 10 Z M15 1 L19.5 5.5 L15 10 Z M23 1 V10" stroke="#6c6c6c" fill="#6c6c6c" stroke-width="1.2"/></svg>
<div class="a" style="left:289px;top:712px;width:1px;height:16px;background:#555"></div>
<span class="a" style="left:368px;top:716px;font-size:10px;color:#c8c8c8">Selection</span>
<svg class="a" style="left:493px;top:714px" width="8" height="12"><path d="M1.5 1 L7 6 L1.5 11 Z" fill="#ddd"/></svg>
<div class="a" style="left:504px;top:712px;width:1px;height:16px;background:#555"></div>
<svg class="a" style="left:510px;top:714px" width="8" height="12"><path d="M6 1.5 L2 6 L6 10.5" stroke="#aaa" stroke-width="1.2" fill="none"/></svg>
<div class="a" style="left:789px;top:713px;width:26px;height:14px;border-radius:7px;background:#5c5c5c"></div>
<svg class="a" style="left:1083px;top:714px" width="8" height="12"><path d="M2 1.5 L6 6 L2 10.5" stroke="#bbb" stroke-width="1.2" fill="none"/></svg>
<div class="a" style="left:1096px;top:711px;width:16px;height:17px;background:#535353"></div>
<div class="a line" style="left:1112px;top:64px;width:2px;height:664px"></div>
<div id="rpanel" class="a"></div>
<div class="a" style="left:1114px;top:65px;width:252px;height:11px;background:#434343"></div>
<svg class="a" style="left:1350px;top:66px" width="12" height="8"><path d="M2.5 1.5 L5.5 4 L2.5 6.5 M6.5 1.5 L9.5 4 L6.5 6.5" stroke="#ddd" stroke-width="1.3" fill="none"/></svg>
<div class="a" style="left:1114px;top:77px;width:252px;height:26px;background:#434343"></div>
<div class="a" style="left:1114px;top:77px;width:67px;height:26px;background:#474747;border-right:1px solid #3c3c3c"></div>
<div class="a" style="left:1181px;top:77px;width:46px;height:27px;background:#535353"></div>
<div class="a" style="left:1227px;top:77px;width:57px;height:26px;background:#474747;border-left:1px solid #3c3c3c;border-right:1px solid #3c3c3c"></div>
<span class="a" style="left:1124px;top:85px;font-size:10.3px;color:#c4c4c4">Properties</span>
<span class="a" style="left:1190px;top:85px;font-size:10.3px;color:#f4f4f4;font-weight:bold;letter-spacing:-0.5px">Layers</span>
<span class="a" style="left:1236px;top:85px;font-size:10.3px;color:#c4c4c4">Libraries</span>
<svg class="a" style="left:1348px;top:86px" width="12" height="10"><path d="M1 1h10M1 3.5h10M1 6h10M1 8.5h10" stroke="#ccc" stroke-width="1.1"/></svg>
<div class="a" style="left:1120px;top:110px;width:240px;height:597px;border:1px solid #5c5c5c;border-radius:3px"></div>
<svg class="a" style="left:1114px;top:104px" width="252" height="80">
  <rect x="7" y="6.5" width="238" height="20.5" fill="#50657c"/>
  <path d="M7 48 H245 M7 69 H245" stroke="#464646" stroke-width="1"/>
  <path d="M7 27.5 H245" stroke="#464646" stroke-width="1"/>
  <path d="M27.5 6 V69 M48.5 6 V69 M209.5 6 V69" stroke="#464646" stroke-width="1"/>
  <rect x="49.5" y="7" width="3.5" height="19" fill="#4a7dfb"/>
  <rect x="49.5" y="28" width="3.5" height="19.5" fill="#4a7dfb"/>
  <rect x="49.5" y="49" width="3.5" height="19.5" fill="#4a7dfb"/>
  <g fill="#c6c6c6">
    <path d="M10 16.5 C12.5 13 19.5 13 22 16.5 C19.5 20 12.5 20 10 16.5Z"/>
    <path d="M10 37.5 C12.5 34 19.5 34 22 37.5 C19.5 41 12.5 41 10 37.5Z"/>
    <path d="M10 58.5 C12.5 55 19.5 55 22 58.5 C19.5 62 12.5 62 10 58.5Z"/>
  </g>
  <g fill="#50657c"><circle cx="16" cy="16.5" r="2"/></g>
  <g fill="#535353"><circle cx="16" cy="37.5" r="2"/><circle cx="16" cy="58.5" r="2"/></g>
  <path d="M62 14.5 L65 17.5 L68 14.5" stroke="#eee" stroke-width="1.3" fill="none"/>
  <rect x="79.5" y="8.5" width="17" height="17" fill="#fff" stroke="#111" stroke-width="1.6"/>
  <path d="M82 12 H89 M82 12 V19 M85.5 12 V17 M88 12 V17" stroke="#3a3030" stroke-width="1.1" fill="none"/>
  <rect x="81" y="15.5" width="8" height="4" fill="#b9dcc4"/>
  <path d="M81 19.5 H91.5" stroke="#444" stroke-width="0.9"/>
  <circle cx="83" cy="21" r="1.3" fill="#333"/>
  <rect x="102.5" y="29.5" width="17" height="17" fill="#fff" stroke="#111" stroke-width="1.6"/>
  <path d="M104.5 30.5 V45.5 M117.5 30.5 V40 L116.5 41 V45.5" stroke="#111" stroke-width="2.2" fill="none"/>
  <rect x="102.5" y="50.5" width="17" height="17" fill="#fff" stroke="#111" stroke-width="1.6"/>
  <path d="M105 55 C106 54 110 53.5 116 53.8 M105 55 V62 M108 55 V60 M115.5 54 V62" stroke="#3a3030" stroke-width="1.1" fill="none"/>
  <rect x="104" y="59" width="14" height="3.5" fill="#b9dcc4"/>
  <path d="M104 62.5 H118" stroke="#444" stroke-width="0.9"/>
  <circle cx="106" cy="63.8" r="1.3" fill="#333"/><circle cx="116.5" cy="63.8" r="1.1" fill="#333"/>
  <circle cx="219.8" cy="16.5" r="3.8" stroke="#ddd" stroke-width="1.1" fill="none"/>
  <circle cx="219.8" cy="37.5" r="3.8" stroke="#ddd" stroke-width="1.1" fill="none"/>
  <circle cx="219.8" cy="58.5" r="3.8" stroke="#ddd" stroke-width="1.1" fill="none"/>
  <path d="M238.5 7 H245 V13.5 Z" fill="#ddd"/>
</svg>
<span class="a" style="left:1215px;top:116px;font-size:10px;color:#f0f0f0">Layer 1</span>
<span class="a" style="left:1239px;top:137px;font-size:10px;color:#f0f0f0;text-decoration:underline">&lt;Clipping...</span>
<span class="a" style="left:1239px;top:158px;font-size:10px;color:#f0f0f0">&lt;Image&gt;</span>
<span class="a" style="left:1120px;top:713px;font-size:10px;color:#e6e6e6">1 Layer</span>
<svg class="a" style="left:1190px;top:708px" width="160" height="18">
  <path d="M9.5 5 H6.5 V14.5 H16 V11.5 M12 3.5 H17.5 V9 M17.5 3.5 L11 10" stroke="#ccc" stroke-width="1.2" fill="none"/>
  <circle cx="38" cy="8" r="4" stroke="#6c6c6c" stroke-width="1.3" fill="none"/><path d="M35 11 L32 14.5" stroke="#6c6c6c" stroke-width="1.6"/>
  <rect x="58" y="4" width="7" height="7" stroke="#ccc" stroke-width="1.2" fill="none"/><rect x="61" y="7" width="7" height="7" stroke="#ccc" stroke-width="1.2" fill="none"/><rect x="59" y="5" width="5" height="5" fill="#ccc"/>
  <path d="M82 3.5 V9 H87 M85 7 L87.5 9 L85 11" stroke="#ccc" stroke-width="1.1" fill="none"/><path d="M88 5 H96 V14 H90 L88 12 Z" fill="#ccc"/>
  <path d="M111 4 H121 V14 H114 L111 11 Z" fill="#ccc"/>
  <path d="M137 6 H146 M139.5 6 V14.5 H143.5 V6 M140 4 H143" stroke="#6c6c6c" stroke-width="1.1" fill="none"/>
</svg>
<div class="a" style="left:0;top:31px;width:1px;height:697px;background:#3a3a3a"></div>
<div id="taskbar" class="a"></div>
<svg class="a" style="left:0;top:728px" width="1366" height="40">
  <!-- faint desktop ghosts -->
  <g opacity="0.5">
  
  <circle cx="590" cy="20" r="14" fill="#0e0e0e"/>
  <rect x="900" y="8" width="30" height="26" rx="4" fill="#151212"/>
  <circle cx="968" cy="20" r="13" fill="#101418"/>
  <circle cx="1005" cy="20" r="13" fill="#181210"/>
  <rect x="1040" y="6" width="28" height="30" fill="#141414"/>
  </g>
  <rect x="1150" y="0" width="32" height="14" fill="#161616"/>
  <text x="1155" y="12" font-family="Liberation Sans" font-weight="bold" font-size="14" fill="#2e2e2e">CC</text>
  <rect x="1238" y="0" width="24" height="10" fill="#3a0c0c"/>
  <text x="1242" y="8" font-family="Liberation Sans" font-weight="bold" font-size="9" fill="#4a1a1a">HD</text>
  <path d="M1300 2 V36 M1292 14 H1316" stroke="#1a1a1a" stroke-width="4"/>
  <!-- start -->
  <path d="M16 742.3 L23 741.3 V748 H16 Z M24 741.1 L32 740 V748 H24 Z M16 749 H23 V755.7 L16 754.7 Z M24 749 H32 V757 L24 755.9 Z" transform="translate(0,-728)" fill="#fff"/>
  <!-- search -->
  <rect x="48" y="0" width="344" height="40" fill="#f0f0f0"/>
  <circle cx="67.5" cy="20" r="8.3" fill="none" stroke="#111" stroke-width="2.4"/>
  <path d="M368.5 9.5 A2.5 2.5 0 0 1 373.5 9.5 V17.5 A2.5 2.5 0 0 1 368.5 17.5 Z" fill="none" stroke="#333" stroke-width="1.2"/>
  <path d="M366.5 16 A4.5 4.5 0 0 0 375.5 16 M371 20.5 V24 M368 24.5 H374" fill="none" stroke="#333" stroke-width="1.2"/>
  <!-- task view -->
  <rect x="409.5" y="14" width="13" height="13" fill="none" stroke="#fff" stroke-width="1.3"/>
  <path d="M406.5 17 V24 M425.5 17 V24" stroke="#fff" stroke-width="1.2"/>
  <!-- explorer -->
  <rect x="456.2" y="11.5" width="21" height="16.5" rx="1" fill="#ffe38a"/>
  <path d="M456.2 14 V12.5 Q456.2 11.2 457.5 11.2 H464.5 L466 13 V14 Z" fill="#f4c542"/>
  <path d="M460.2 29 V22 Q460.2 20.9 461.5 20.9 H472.6 Q473.9 20.9 473.9 22 V29 H470 V23.9 H464 V29 Z" fill="#3aaee8"/>
  <rect x="447" y="38" width="40" height="2" fill="#76b9ed"/>
  <!-- store -->
  <rect x="504" y="14" width="23" height="16.5" rx="1.5" fill="#fff"/>
  <path d="M511 14 V11.5 A4.5 4.5 0 0 1 520 11.5 V14" fill="none" stroke="#fff" stroke-width="1.4"/>
  <rect x="510" y="16.5" width="5" height="5" fill="#f25022"/>
  <rect x="516" y="16.5" width="5" height="5" fill="#7fba00"/>
  <rect x="510" y="22.5" width="5" height="5" fill="#00a4ef"/>
  <rect x="516" y="22.5" width="5" height="5" fill="#ffb900"/>
  <!-- chrome -->
  <circle cx="565" cy="20" r="11" fill="#5d8de0"/>
  <path d="M565 9 A11 11 0 0 1 575.5 16 L565 16 Z" fill="#4e7fd6"/>
  <circle cx="565" cy="20" r="5" fill="#fff"/>
  <circle cx="565" cy="20" r="3.8" fill="#6e9cf0"/>
  <rect x="545" y="38" width="40" height="2" fill="#76b9ed"/>
  <!-- mail -->
  <path d="M602 17 L614 10 L626 17 V29 H602 Z" fill="#fff"/>
  <path d="M602 17 L614 23 L620 20 L612 24.5 L626 29" fill="none" stroke="#000" stroke-width="1.6"/>
  <!-- adobe apps -->
  <rect x="652.5" y="9.5" width="20.5" height="19.5" fill="#1f0a3a" stroke="#d291ff" stroke-width="1.4"/>
  <text x="662.8" y="23.2" text-anchor="middle" font-family="Liberation Sans" font-weight="bold" font-size="11.5" fill="#d291ff">Ae</text>
  <rect x="701.5" y="9.5" width="20.5" height="19.5" fill="#2a0a34" stroke="#e77bf9" stroke-width="1.4"/>
  <text x="711.8" y="23.2" text-anchor="middle" font-family="Liberation Sans" font-weight="bold" font-size="11.5" fill="#e77bf9">Pr</text>
  <rect x="750.5" y="9.5" width="20.5" height="19.5" fill="#0b1c2a" stroke="#b0d8ee" stroke-width="1.4"/>
  <text x="760.8" y="23.2" text-anchor="middle" font-family="Liberation Sans" font-weight="bold" font-size="11.5" fill="#b0d8ee">Lr</text>
  <rect x="799.5" y="9.5" width="20.5" height="19.5" fill="#061e2d" stroke="#31c5f4" stroke-width="1.4"/>
  <text x="809.8" y="23.2" text-anchor="middle" font-family="Liberation Sans" font-weight="bold" font-size="11.5" fill="#31c5f4">Ps</text>
  <rect x="835" y="0" width="48" height="40" fill="#3b3b3b"/>
  <rect x="848.5" y="9.5" width="20.5" height="19.5" fill="#2a1300" stroke="#ff7c00" stroke-width="1.4"/>
  <text x="858.8" y="23.2" text-anchor="middle" font-family="Liberation Sans" font-weight="bold" font-size="11.5" fill="#ff7c00">Ai</text>
  <rect x="835" y="38" width="48" height="2" fill="#76b9ed"/>
  <!-- tray -->
  <g fill="none" stroke="#fff" stroke-width="1.2">
    <circle cx="1090.5" cy="20" r="2.6"/><path d="M1086 27 A4.5 4.5 0 0 1 1095 27"/>
    <circle cx="1096.5" cy="15" r="2.6"/><path d="M1093 21 A4.5 4.5 0 0 1 1101 23"/>
    <path d="M1123.5 23 L1129 17.5 L1134.5 23" stroke-width="1.4"/>
    <path d="M1149 25 A11 11 0 0 1 1160 14 M1152 25 A8 8 0 0 1 1160 17 M1155 25 A5 5 0 0 1 1160 20"/>
    <rect x="1174" y="16.5" width="10" height="8"/>
    <path d="M1170 14 V18 M1173 14 V18 M1169 18 H1174 M1171.5 18 V22 L1174 22"/>
    <path d="M1194 17 H1197 L1201 13.5 V27 L1197 23.5 H1194 Z M1203.5 17.5 A4 4 0 0 1 1203.5 23 M1206 15 A7 7 0 0 1 1206 25.5"/>
    <path d="M1326 13 H1340 V24 H1335 L1332 27 L1330 24 H1326 Z" stroke-width="1.3"/>
  </g>
  <circle cx="1158.5" cy="24.5" r="1.5" fill="#fff"/>
  <text x="1219.5" y="24" font-family="Liberation Sans" font-size="11.5" fill="#fff" letter-spacing="-0.3">ENG</text>
  <text x="1281" y="15.5" text-anchor="middle" font-family="Liberation Sans" font-size="11.5" fill="#fff">12:33 AM</text>
  <text x="1281" y="33" text-anchor="middle" font-family="Liberation Sans" font-size="11.5" fill="#fff">3/1/2018</text>
  <rect x="1363" y="0" width="1" height="40" fill="#333"/>
</svg>
<span class="a" style="left:88px;top:740px;font-size:14.3px;color:#2b2b2b;white-space:nowrap">Type here to search</span>
</body></html>
